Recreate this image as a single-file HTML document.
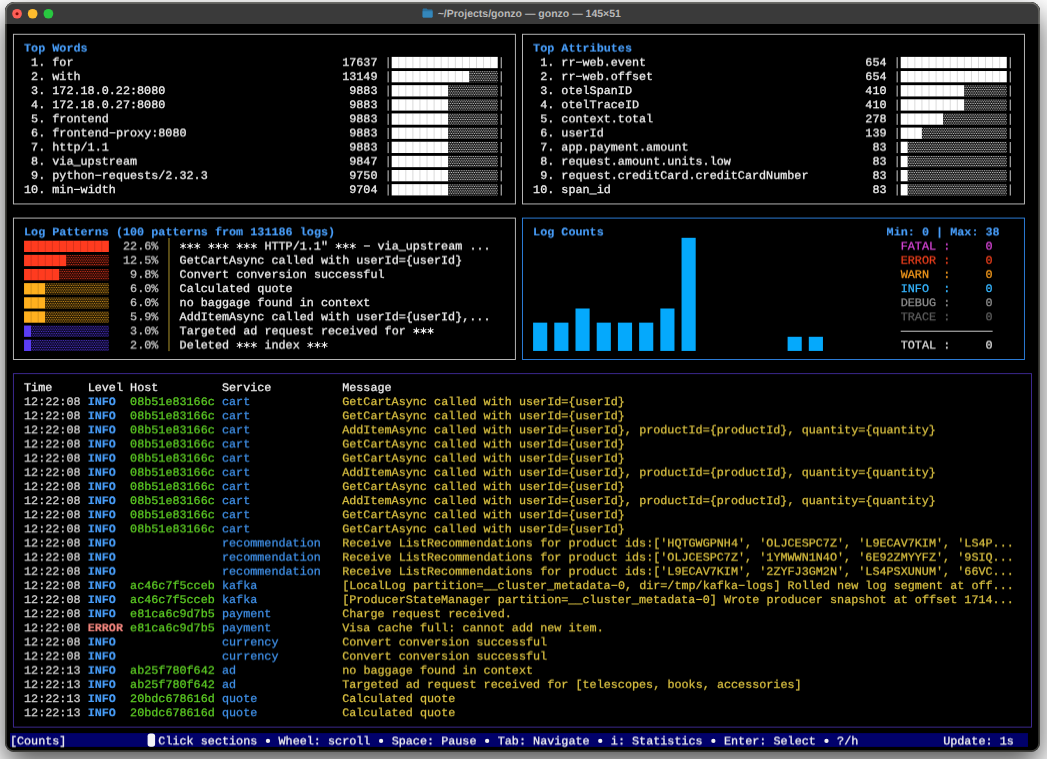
<!DOCTYPE html>
<html><head><meta charset="utf-8"><title>gonzo</title>
<style>
html,body{margin:0;padding:0;font-family:"Liberation Mono",monospace;}
body{width:1047px;height:759px;overflow:hidden;background:#ffffff;position:relative;
 font-family:"Liberation Mono",monospace;text-rendering:geometricPrecision;}
#win{position:absolute;left:5.3px;top:2px;width:1034.7px;height:749.7px;background:#000;
 border-radius:9px;overflow:hidden;
 box-shadow:0 13px 30px rgba(0,0,0,.68);}
#tb{position:absolute;left:0;top:0;width:100%;height:22.35px;background:#3a3a3a;}
#edge{position:absolute;left:0;top:0;right:0;bottom:0;border-radius:9px;
 box-shadow:inset 0 0 0 1.7px rgba(255,255,238,.25);pointer-events:none;}
.tl{position:absolute;width:9.2px;height:9.2px;border-radius:50%;top:6.6px;}
#title{position:absolute;top:0;left:432.4px;height:22.3px;line-height:25.6px;white-space:pre;
 font-family:"Liberation Sans",sans-serif;font-weight:bold;font-size:10.5px;color:#b9b9b9;}
#term{position:absolute;left:0;top:0;width:1047px;height:759px;}
.row{position:absolute;left:0;top:0;width:1047px;height:16px;will-change:transform;transform-origin:0 0;}
.t{position:absolute;top:0;white-space:pre;font-size:11.78px;line-height:14.14px;height:14.14px;
 transform:translateY(0px) scaleY(0.97);transform-origin:50% 50%;-webkit-text-stroke:0.27px currentColor;}
.b{font-weight:bold;-webkit-text-stroke:0.15px currentColor;}
.r{position:absolute;}
.bx{position:absolute;border:1px solid;}
</style></head>
<body>
<div id="win">
 <div id="tb"></div>
 <svg style="position:absolute;left:416.6px;top:6.1px" width="11.2" height="10" viewBox="0 0 22 20">
  <path d="M1 3.2C1 2 2 1 3.2 1h5.2c.8 0 1.3.3 1.8.9l1 1.3h7.6C20 3.2 21 4.2 21 5.4V17c0 1.2-1 2.2-2.2 2.2H3.2C2 19.200 1 18.200 1 17z" fill="#2a709d"/>
  <path d="M1 6.4h20V17c0 1.2-1 2.2-2.2 2.2H3.2C2 19.2 1 18.2 1 17z" fill="#3487bb"/>
 </svg>
 <div id="title">~/Projects/gonzo — gonzo — 145×51</div>
 <div id="edge"></div>
</div>
<svg id="shapes" width="1047" height="759" viewBox="0 0 1047 759" style="position:absolute;left:0;top:0">
<defs>
<pattern id="sh-w" width="1.7675" height="3.535" patternUnits="userSpaceOnUse" x="10.1" y="28.9"><rect width="1.7675" height="3.535" fill="#1b1b1b"/><rect x="0" y="0" width="0.9" height="0.9" fill="#c8c8c8"/><rect x="0.8838" y="1.7675" width="0.9" height="0.9" fill="#c8c8c8"/></pattern>
<pattern id="sh-r" width="1.7675" height="3.535" patternUnits="userSpaceOnUse" x="10.1" y="28.9"><rect width="1.7675" height="3.535" fill="#260804"/><rect x="0" y="0" width="0.9" height="0.9" fill="#d23119"/><rect x="0.8838" y="1.7675" width="0.9" height="0.9" fill="#d23119"/></pattern>
<pattern id="sh-o" width="1.7675" height="3.535" patternUnits="userSpaceOnUse" x="10.1" y="28.9"><rect width="1.7675" height="3.535" fill="#261a04"/><rect x="0" y="0" width="0.9" height="0.9" fill="#d29119"/><rect x="0.8838" y="1.7675" width="0.9" height="0.9" fill="#d29119"/></pattern>
<pattern id="sh-p" width="1.7675" height="3.535" patternUnits="userSpaceOnUse" x="10.1" y="28.9"><rect width="1.7675" height="3.535" fill="#0c0826"/><rect x="0" y="0" width="0.9" height="0.9" fill="#4b32ca"/><rect x="0.8838" y="1.7675" width="0.9" height="0.9" fill="#4b32ca"/></pattern>
</defs>
<rect x="13.44" y="34.27" width="501.97" height="169.68" fill="none" stroke="#bcbcbc" stroke-width="0.95"/>
<rect x="387.55" y="57.18" width="1.2" height="11.1" fill="#a8a8a8" />
<rect x="391.68" y="56.88" width="106.05" height="11.3" fill="#ffffff" />
<rect x="398.3" y="56.88" width="0.9" height="11.3" fill="rgba(0,0,0,0.16)" />
<rect x="405.37" y="56.88" width="0.9" height="11.3" fill="rgba(0,0,0,0.16)" />
<rect x="412.44" y="56.88" width="0.9" height="11.3" fill="rgba(0,0,0,0.16)" />
<rect x="419.51" y="56.88" width="0.9" height="11.3" fill="rgba(0,0,0,0.16)" />
<rect x="426.58" y="56.88" width="0.9" height="11.3" fill="rgba(0,0,0,0.16)" />
<rect x="433.65" y="56.88" width="0.9" height="11.3" fill="rgba(0,0,0,0.16)" />
<rect x="440.72" y="56.88" width="0.9" height="11.3" fill="rgba(0,0,0,0.16)" />
<rect x="447.79" y="56.88" width="0.9" height="11.3" fill="rgba(0,0,0,0.16)" />
<rect x="454.86" y="56.88" width="0.9" height="11.3" fill="rgba(0,0,0,0.16)" />
<rect x="461.93" y="56.88" width="0.9" height="11.3" fill="rgba(0,0,0,0.16)" />
<rect x="469" y="56.88" width="0.9" height="11.3" fill="rgba(0,0,0,0.16)" />
<rect x="476.07" y="56.88" width="0.9" height="11.3" fill="rgba(0,0,0,0.16)" />
<rect x="483.14" y="56.88" width="0.9" height="11.3" fill="rgba(0,0,0,0.16)" />
<rect x="490.21" y="56.88" width="0.9" height="11.3" fill="rgba(0,0,0,0.16)" />
<rect x="500.67" y="57.18" width="1.2" height="11.1" fill="#a8a8a8" />
<rect x="387.55" y="71.32" width="1.2" height="11.1" fill="#a8a8a8" />
<rect x="391.68" y="71.02" width="77.77" height="11.3" fill="#ffffff" />
<rect x="398.3" y="71.02" width="0.9" height="11.3" fill="rgba(0,0,0,0.16)" />
<rect x="405.37" y="71.02" width="0.9" height="11.3" fill="rgba(0,0,0,0.16)" />
<rect x="412.44" y="71.02" width="0.9" height="11.3" fill="rgba(0,0,0,0.16)" />
<rect x="419.51" y="71.02" width="0.9" height="11.3" fill="rgba(0,0,0,0.16)" />
<rect x="426.58" y="71.02" width="0.9" height="11.3" fill="rgba(0,0,0,0.16)" />
<rect x="433.65" y="71.02" width="0.9" height="11.3" fill="rgba(0,0,0,0.16)" />
<rect x="440.72" y="71.02" width="0.9" height="11.3" fill="rgba(0,0,0,0.16)" />
<rect x="447.79" y="71.02" width="0.9" height="11.3" fill="rgba(0,0,0,0.16)" />
<rect x="454.86" y="71.02" width="0.9" height="11.3" fill="rgba(0,0,0,0.16)" />
<rect x="461.93" y="71.02" width="0.9" height="11.3" fill="rgba(0,0,0,0.16)" />
<rect x="469.45" y="71.02" width="28.28" height="11.3" fill="url(#sh-w)" />
<rect x="500.67" y="71.32" width="1.2" height="11.1" fill="#a8a8a8" />
<rect x="387.55" y="85.46" width="1.2" height="11.1" fill="#a8a8a8" />
<rect x="391.68" y="85.16" width="56.56" height="11.3" fill="#ffffff" />
<rect x="398.3" y="85.16" width="0.9" height="11.3" fill="rgba(0,0,0,0.16)" />
<rect x="405.37" y="85.16" width="0.9" height="11.3" fill="rgba(0,0,0,0.16)" />
<rect x="412.44" y="85.16" width="0.9" height="11.3" fill="rgba(0,0,0,0.16)" />
<rect x="419.51" y="85.16" width="0.9" height="11.3" fill="rgba(0,0,0,0.16)" />
<rect x="426.58" y="85.16" width="0.9" height="11.3" fill="rgba(0,0,0,0.16)" />
<rect x="433.65" y="85.16" width="0.9" height="11.3" fill="rgba(0,0,0,0.16)" />
<rect x="440.72" y="85.16" width="0.9" height="11.3" fill="rgba(0,0,0,0.16)" />
<rect x="448.24" y="85.16" width="49.49" height="11.3" fill="url(#sh-w)" />
<rect x="500.67" y="85.46" width="1.2" height="11.1" fill="#a8a8a8" />
<rect x="387.55" y="99.6" width="1.2" height="11.1" fill="#a8a8a8" />
<rect x="391.68" y="99.3" width="56.56" height="11.3" fill="#ffffff" />
<rect x="398.3" y="99.3" width="0.9" height="11.3" fill="rgba(0,0,0,0.16)" />
<rect x="405.37" y="99.3" width="0.9" height="11.3" fill="rgba(0,0,0,0.16)" />
<rect x="412.44" y="99.3" width="0.9" height="11.3" fill="rgba(0,0,0,0.16)" />
<rect x="419.51" y="99.3" width="0.9" height="11.3" fill="rgba(0,0,0,0.16)" />
<rect x="426.58" y="99.3" width="0.9" height="11.3" fill="rgba(0,0,0,0.16)" />
<rect x="433.65" y="99.3" width="0.9" height="11.3" fill="rgba(0,0,0,0.16)" />
<rect x="440.72" y="99.3" width="0.9" height="11.3" fill="rgba(0,0,0,0.16)" />
<rect x="448.24" y="99.3" width="49.49" height="11.3" fill="url(#sh-w)" />
<rect x="500.67" y="99.6" width="1.2" height="11.1" fill="#a8a8a8" />
<rect x="387.55" y="113.74" width="1.2" height="11.1" fill="#a8a8a8" />
<rect x="391.68" y="113.44" width="56.56" height="11.3" fill="#ffffff" />
<rect x="398.3" y="113.44" width="0.9" height="11.3" fill="rgba(0,0,0,0.16)" />
<rect x="405.37" y="113.44" width="0.9" height="11.3" fill="rgba(0,0,0,0.16)" />
<rect x="412.44" y="113.44" width="0.9" height="11.3" fill="rgba(0,0,0,0.16)" />
<rect x="419.51" y="113.44" width="0.9" height="11.3" fill="rgba(0,0,0,0.16)" />
<rect x="426.58" y="113.44" width="0.9" height="11.3" fill="rgba(0,0,0,0.16)" />
<rect x="433.65" y="113.44" width="0.9" height="11.3" fill="rgba(0,0,0,0.16)" />
<rect x="440.72" y="113.44" width="0.9" height="11.3" fill="rgba(0,0,0,0.16)" />
<rect x="448.24" y="113.44" width="49.49" height="11.3" fill="url(#sh-w)" />
<rect x="500.67" y="113.74" width="1.2" height="11.1" fill="#a8a8a8" />
<rect x="109.38" y="132.3" width="6.07" height="1.1" fill="#f0f0f0" />
<rect x="387.55" y="127.88" width="1.2" height="11.1" fill="#a8a8a8" />
<rect x="391.68" y="127.58" width="56.56" height="11.3" fill="#ffffff" />
<rect x="398.3" y="127.58" width="0.9" height="11.3" fill="rgba(0,0,0,0.16)" />
<rect x="405.37" y="127.58" width="0.9" height="11.3" fill="rgba(0,0,0,0.16)" />
<rect x="412.44" y="127.58" width="0.9" height="11.3" fill="rgba(0,0,0,0.16)" />
<rect x="419.51" y="127.58" width="0.9" height="11.3" fill="rgba(0,0,0,0.16)" />
<rect x="426.58" y="127.58" width="0.9" height="11.3" fill="rgba(0,0,0,0.16)" />
<rect x="433.65" y="127.58" width="0.9" height="11.3" fill="rgba(0,0,0,0.16)" />
<rect x="440.72" y="127.58" width="0.9" height="11.3" fill="rgba(0,0,0,0.16)" />
<rect x="448.24" y="127.58" width="49.49" height="11.3" fill="url(#sh-w)" />
<rect x="500.67" y="127.88" width="1.2" height="11.1" fill="#a8a8a8" />
<rect x="387.55" y="142.02" width="1.2" height="11.1" fill="#a8a8a8" />
<rect x="391.68" y="141.72" width="56.56" height="11.3" fill="#ffffff" />
<rect x="398.3" y="141.72" width="0.9" height="11.3" fill="rgba(0,0,0,0.16)" />
<rect x="405.37" y="141.72" width="0.9" height="11.3" fill="rgba(0,0,0,0.16)" />
<rect x="412.44" y="141.72" width="0.9" height="11.3" fill="rgba(0,0,0,0.16)" />
<rect x="419.51" y="141.72" width="0.9" height="11.3" fill="rgba(0,0,0,0.16)" />
<rect x="426.58" y="141.72" width="0.9" height="11.3" fill="rgba(0,0,0,0.16)" />
<rect x="433.65" y="141.72" width="0.9" height="11.3" fill="rgba(0,0,0,0.16)" />
<rect x="440.72" y="141.72" width="0.9" height="11.3" fill="rgba(0,0,0,0.16)" />
<rect x="448.24" y="141.72" width="49.49" height="11.3" fill="url(#sh-w)" />
<rect x="500.67" y="142.02" width="1.2" height="11.1" fill="#a8a8a8" />
<rect x="387.55" y="156.16" width="1.2" height="11.1" fill="#a8a8a8" />
<rect x="391.68" y="155.86" width="56.56" height="11.3" fill="#ffffff" />
<rect x="398.3" y="155.86" width="0.9" height="11.3" fill="rgba(0,0,0,0.16)" />
<rect x="405.37" y="155.86" width="0.9" height="11.3" fill="rgba(0,0,0,0.16)" />
<rect x="412.44" y="155.86" width="0.9" height="11.3" fill="rgba(0,0,0,0.16)" />
<rect x="419.51" y="155.86" width="0.9" height="11.3" fill="rgba(0,0,0,0.16)" />
<rect x="426.58" y="155.86" width="0.9" height="11.3" fill="rgba(0,0,0,0.16)" />
<rect x="433.65" y="155.86" width="0.9" height="11.3" fill="rgba(0,0,0,0.16)" />
<rect x="440.72" y="155.86" width="0.9" height="11.3" fill="rgba(0,0,0,0.16)" />
<rect x="448.24" y="155.86" width="49.49" height="11.3" fill="url(#sh-w)" />
<rect x="500.67" y="156.16" width="1.2" height="11.1" fill="#a8a8a8" />
<rect x="95.24" y="174.72" width="6.07" height="1.1" fill="#f0f0f0" />
<rect x="387.55" y="170.3" width="1.2" height="11.1" fill="#a8a8a8" />
<rect x="391.68" y="170" width="56.56" height="11.3" fill="#ffffff" />
<rect x="398.3" y="170" width="0.9" height="11.3" fill="rgba(0,0,0,0.16)" />
<rect x="405.37" y="170" width="0.9" height="11.3" fill="rgba(0,0,0,0.16)" />
<rect x="412.44" y="170" width="0.9" height="11.3" fill="rgba(0,0,0,0.16)" />
<rect x="419.51" y="170" width="0.9" height="11.3" fill="rgba(0,0,0,0.16)" />
<rect x="426.58" y="170" width="0.9" height="11.3" fill="rgba(0,0,0,0.16)" />
<rect x="433.65" y="170" width="0.9" height="11.3" fill="rgba(0,0,0,0.16)" />
<rect x="440.72" y="170" width="0.9" height="11.3" fill="rgba(0,0,0,0.16)" />
<rect x="448.24" y="170" width="49.49" height="11.3" fill="url(#sh-w)" />
<rect x="500.67" y="170.3" width="1.2" height="11.1" fill="#a8a8a8" />
<rect x="74.03" y="188.86" width="6.07" height="1.1" fill="#f0f0f0" />
<rect x="387.55" y="184.44" width="1.2" height="11.1" fill="#a8a8a8" />
<rect x="391.68" y="184.14" width="56.56" height="11.3" fill="#ffffff" />
<rect x="398.3" y="184.14" width="0.9" height="11.3" fill="rgba(0,0,0,0.16)" />
<rect x="405.37" y="184.14" width="0.9" height="11.3" fill="rgba(0,0,0,0.16)" />
<rect x="412.44" y="184.14" width="0.9" height="11.3" fill="rgba(0,0,0,0.16)" />
<rect x="419.51" y="184.14" width="0.9" height="11.3" fill="rgba(0,0,0,0.16)" />
<rect x="426.58" y="184.14" width="0.9" height="11.3" fill="rgba(0,0,0,0.16)" />
<rect x="433.65" y="184.14" width="0.9" height="11.3" fill="rgba(0,0,0,0.16)" />
<rect x="440.72" y="184.14" width="0.9" height="11.3" fill="rgba(0,0,0,0.16)" />
<rect x="448.24" y="184.14" width="49.49" height="11.3" fill="url(#sh-w)" />
<rect x="500.67" y="184.44" width="1.2" height="11.1" fill="#a8a8a8" />
<rect x="522.48" y="34.27" width="501.97" height="169.68" fill="none" stroke="#bcbcbc" stroke-width="0.95"/>
<rect x="576" y="61.6" width="6.07" height="1.1" fill="#f0f0f0" />
<rect x="896.58" y="57.18" width="1.2" height="11.1" fill="#a8a8a8" />
<rect x="900.72" y="56.88" width="106.05" height="11.3" fill="#ffffff" />
<rect x="907.34" y="56.88" width="0.9" height="11.3" fill="rgba(0,0,0,0.16)" />
<rect x="914.41" y="56.88" width="0.9" height="11.3" fill="rgba(0,0,0,0.16)" />
<rect x="921.48" y="56.88" width="0.9" height="11.3" fill="rgba(0,0,0,0.16)" />
<rect x="928.55" y="56.88" width="0.9" height="11.3" fill="rgba(0,0,0,0.16)" />
<rect x="935.62" y="56.88" width="0.9" height="11.3" fill="rgba(0,0,0,0.16)" />
<rect x="942.69" y="56.88" width="0.9" height="11.3" fill="rgba(0,0,0,0.16)" />
<rect x="949.76" y="56.88" width="0.9" height="11.3" fill="rgba(0,0,0,0.16)" />
<rect x="956.83" y="56.88" width="0.9" height="11.3" fill="rgba(0,0,0,0.16)" />
<rect x="963.9" y="56.88" width="0.9" height="11.3" fill="rgba(0,0,0,0.16)" />
<rect x="970.97" y="56.88" width="0.9" height="11.3" fill="rgba(0,0,0,0.16)" />
<rect x="978.04" y="56.88" width="0.9" height="11.3" fill="rgba(0,0,0,0.16)" />
<rect x="985.11" y="56.88" width="0.9" height="11.3" fill="rgba(0,0,0,0.16)" />
<rect x="992.18" y="56.88" width="0.9" height="11.3" fill="rgba(0,0,0,0.16)" />
<rect x="999.25" y="56.88" width="0.9" height="11.3" fill="rgba(0,0,0,0.16)" />
<rect x="1009.7" y="57.18" width="1.2" height="11.1" fill="#a8a8a8" />
<rect x="576" y="75.74" width="6.07" height="1.1" fill="#f0f0f0" />
<rect x="896.58" y="71.32" width="1.2" height="11.1" fill="#a8a8a8" />
<rect x="900.72" y="71.02" width="106.05" height="11.3" fill="#ffffff" />
<rect x="907.34" y="71.02" width="0.9" height="11.3" fill="rgba(0,0,0,0.16)" />
<rect x="914.41" y="71.02" width="0.9" height="11.3" fill="rgba(0,0,0,0.16)" />
<rect x="921.48" y="71.02" width="0.9" height="11.3" fill="rgba(0,0,0,0.16)" />
<rect x="928.55" y="71.02" width="0.9" height="11.3" fill="rgba(0,0,0,0.16)" />
<rect x="935.62" y="71.02" width="0.9" height="11.3" fill="rgba(0,0,0,0.16)" />
<rect x="942.69" y="71.02" width="0.9" height="11.3" fill="rgba(0,0,0,0.16)" />
<rect x="949.76" y="71.02" width="0.9" height="11.3" fill="rgba(0,0,0,0.16)" />
<rect x="956.83" y="71.02" width="0.9" height="11.3" fill="rgba(0,0,0,0.16)" />
<rect x="963.9" y="71.02" width="0.9" height="11.3" fill="rgba(0,0,0,0.16)" />
<rect x="970.97" y="71.02" width="0.9" height="11.3" fill="rgba(0,0,0,0.16)" />
<rect x="978.04" y="71.02" width="0.9" height="11.3" fill="rgba(0,0,0,0.16)" />
<rect x="985.11" y="71.02" width="0.9" height="11.3" fill="rgba(0,0,0,0.16)" />
<rect x="992.18" y="71.02" width="0.9" height="11.3" fill="rgba(0,0,0,0.16)" />
<rect x="999.25" y="71.02" width="0.9" height="11.3" fill="rgba(0,0,0,0.16)" />
<rect x="1009.7" y="71.32" width="1.2" height="11.1" fill="#a8a8a8" />
<rect x="896.58" y="85.46" width="1.2" height="11.1" fill="#a8a8a8" />
<rect x="900.72" y="85.16" width="63.63" height="11.3" fill="#ffffff" />
<rect x="907.34" y="85.16" width="0.9" height="11.3" fill="rgba(0,0,0,0.16)" />
<rect x="914.41" y="85.16" width="0.9" height="11.3" fill="rgba(0,0,0,0.16)" />
<rect x="921.48" y="85.16" width="0.9" height="11.3" fill="rgba(0,0,0,0.16)" />
<rect x="928.55" y="85.16" width="0.9" height="11.3" fill="rgba(0,0,0,0.16)" />
<rect x="935.62" y="85.16" width="0.9" height="11.3" fill="rgba(0,0,0,0.16)" />
<rect x="942.69" y="85.16" width="0.9" height="11.3" fill="rgba(0,0,0,0.16)" />
<rect x="949.76" y="85.16" width="0.9" height="11.3" fill="rgba(0,0,0,0.16)" />
<rect x="956.83" y="85.16" width="0.9" height="11.3" fill="rgba(0,0,0,0.16)" />
<rect x="964.35" y="85.16" width="42.42" height="11.3" fill="url(#sh-w)" />
<rect x="1009.7" y="85.46" width="1.2" height="11.1" fill="#a8a8a8" />
<rect x="896.58" y="99.6" width="1.2" height="11.1" fill="#a8a8a8" />
<rect x="900.72" y="99.3" width="63.63" height="11.3" fill="#ffffff" />
<rect x="907.34" y="99.3" width="0.9" height="11.3" fill="rgba(0,0,0,0.16)" />
<rect x="914.41" y="99.3" width="0.9" height="11.3" fill="rgba(0,0,0,0.16)" />
<rect x="921.48" y="99.3" width="0.9" height="11.3" fill="rgba(0,0,0,0.16)" />
<rect x="928.55" y="99.3" width="0.9" height="11.3" fill="rgba(0,0,0,0.16)" />
<rect x="935.62" y="99.3" width="0.9" height="11.3" fill="rgba(0,0,0,0.16)" />
<rect x="942.69" y="99.3" width="0.9" height="11.3" fill="rgba(0,0,0,0.16)" />
<rect x="949.76" y="99.3" width="0.9" height="11.3" fill="rgba(0,0,0,0.16)" />
<rect x="956.83" y="99.3" width="0.9" height="11.3" fill="rgba(0,0,0,0.16)" />
<rect x="964.35" y="99.3" width="42.42" height="11.3" fill="url(#sh-w)" />
<rect x="1009.7" y="99.6" width="1.2" height="11.1" fill="#a8a8a8" />
<rect x="896.58" y="113.74" width="1.2" height="11.1" fill="#a8a8a8" />
<rect x="900.72" y="113.44" width="42.42" height="11.3" fill="#ffffff" />
<rect x="907.34" y="113.44" width="0.9" height="11.3" fill="rgba(0,0,0,0.16)" />
<rect x="914.41" y="113.44" width="0.9" height="11.3" fill="rgba(0,0,0,0.16)" />
<rect x="921.48" y="113.44" width="0.9" height="11.3" fill="rgba(0,0,0,0.16)" />
<rect x="928.55" y="113.44" width="0.9" height="11.3" fill="rgba(0,0,0,0.16)" />
<rect x="935.62" y="113.44" width="0.9" height="11.3" fill="rgba(0,0,0,0.16)" />
<rect x="943.14" y="113.44" width="63.63" height="11.3" fill="url(#sh-w)" />
<rect x="1009.7" y="113.74" width="1.2" height="11.1" fill="#a8a8a8" />
<rect x="896.58" y="127.88" width="1.2" height="11.1" fill="#a8a8a8" />
<rect x="900.72" y="127.58" width="21.21" height="11.3" fill="#ffffff" />
<rect x="907.34" y="127.58" width="0.9" height="11.3" fill="rgba(0,0,0,0.16)" />
<rect x="914.41" y="127.58" width="0.9" height="11.3" fill="rgba(0,0,0,0.16)" />
<rect x="921.93" y="127.58" width="84.84" height="11.3" fill="url(#sh-w)" />
<rect x="1009.7" y="127.88" width="1.2" height="11.1" fill="#a8a8a8" />
<rect x="896.58" y="142.02" width="1.2" height="11.1" fill="#a8a8a8" />
<rect x="900.72" y="141.72" width="7.07" height="11.3" fill="#ffffff" />
<rect x="907.79" y="141.72" width="98.98" height="11.3" fill="url(#sh-w)" />
<rect x="1009.7" y="142.02" width="1.2" height="11.1" fill="#a8a8a8" />
<rect x="896.58" y="156.16" width="1.2" height="11.1" fill="#a8a8a8" />
<rect x="900.72" y="155.86" width="7.07" height="11.3" fill="#ffffff" />
<rect x="907.79" y="155.86" width="98.98" height="11.3" fill="url(#sh-w)" />
<rect x="1009.7" y="156.16" width="1.2" height="11.1" fill="#a8a8a8" />
<rect x="896.58" y="170.3" width="1.2" height="11.1" fill="#a8a8a8" />
<rect x="900.72" y="170" width="7.07" height="11.3" fill="#ffffff" />
<rect x="907.79" y="170" width="98.98" height="11.3" fill="url(#sh-w)" />
<rect x="1009.7" y="170.3" width="1.2" height="11.1" fill="#a8a8a8" />
<rect x="896.58" y="184.44" width="1.2" height="11.1" fill="#a8a8a8" />
<rect x="900.72" y="184.14" width="7.07" height="11.3" fill="#ffffff" />
<rect x="907.79" y="184.14" width="98.98" height="11.3" fill="url(#sh-w)" />
<rect x="1009.7" y="184.44" width="1.2" height="11.1" fill="#a8a8a8" />
<rect x="13.44" y="218.09" width="501.97" height="141.4" fill="none" stroke="#bcbcbc" stroke-width="0.95"/>
<rect x="24.04" y="240.7" width="84.84" height="11.3" fill="#ff3b1f" />
<rect x="30.66" y="240.7" width="0.9" height="11.3" fill="rgba(0,0,0,0.16)" />
<rect x="37.73" y="240.7" width="0.9" height="11.3" fill="rgba(0,0,0,0.16)" />
<rect x="44.8" y="240.7" width="0.9" height="11.3" fill="rgba(0,0,0,0.16)" />
<rect x="51.87" y="240.7" width="0.9" height="11.3" fill="rgba(0,0,0,0.16)" />
<rect x="58.94" y="240.7" width="0.9" height="11.3" fill="rgba(0,0,0,0.16)" />
<rect x="66.01" y="240.7" width="0.9" height="11.3" fill="rgba(0,0,0,0.16)" />
<rect x="73.08" y="240.7" width="0.9" height="11.3" fill="rgba(0,0,0,0.16)" />
<rect x="80.15" y="240.7" width="0.9" height="11.3" fill="rgba(0,0,0,0.16)" />
<rect x="87.22" y="240.7" width="0.9" height="11.3" fill="rgba(0,0,0,0.16)" />
<rect x="94.29" y="240.7" width="0.9" height="11.3" fill="rgba(0,0,0,0.16)" />
<rect x="101.36" y="240.7" width="0.9" height="11.3" fill="rgba(0,0,0,0.16)" />
<path d="M183.12 242.72L183.12 249.32M180.26 244.37L185.97 247.67M185.97 244.37L180.26 247.67" stroke="#f0f0f0" stroke-width="1.05" fill="none"/>
<path d="M190.19 242.72L190.19 249.32M187.33 244.37L193.04 247.67M193.04 244.37L187.33 247.67" stroke="#f0f0f0" stroke-width="1.05" fill="none"/>
<path d="M197.25 242.72L197.25 249.32M194.4 244.37L200.11 247.67M200.11 244.37L194.4 247.67" stroke="#f0f0f0" stroke-width="1.05" fill="none"/>
<path d="M211.4 242.72L211.4 249.32M208.54 244.37L214.25 247.67M214.25 244.37L208.54 247.67" stroke="#f0f0f0" stroke-width="1.05" fill="none"/>
<path d="M218.47 242.72L218.47 249.32M215.61 244.37L221.32 247.67M221.32 244.37L215.61 247.67" stroke="#f0f0f0" stroke-width="1.05" fill="none"/>
<path d="M225.54 242.72L225.54 249.32M222.68 244.37L228.39 247.67M228.39 244.37L222.68 247.67" stroke="#f0f0f0" stroke-width="1.05" fill="none"/>
<path d="M239.68 242.72L239.68 249.32M236.82 244.37L242.53 247.67M242.53 244.37L236.82 247.67" stroke="#f0f0f0" stroke-width="1.05" fill="none"/>
<path d="M246.75 242.72L246.75 249.32M243.89 244.37L249.6 247.67M249.6 244.37L243.89 247.67" stroke="#f0f0f0" stroke-width="1.05" fill="none"/>
<path d="M253.81 242.72L253.81 249.32M250.96 244.37L256.67 247.67M256.67 244.37L250.96 247.67" stroke="#f0f0f0" stroke-width="1.05" fill="none"/>
<path d="M338.66 242.72L338.66 249.32M335.8 244.37L341.51 247.67M341.51 244.37L335.8 247.67" stroke="#f0f0f0" stroke-width="1.05" fill="none"/>
<path d="M345.73 242.72L345.73 249.32M342.87 244.37L348.58 247.67M348.58 244.37L342.87 247.67" stroke="#f0f0f0" stroke-width="1.05" fill="none"/>
<path d="M352.8 242.72L352.8 249.32M349.94 244.37L355.65 247.67M355.65 244.37L349.94 247.67" stroke="#f0f0f0" stroke-width="1.05" fill="none"/>
<rect x="363.9" y="245.42" width="6.07" height="1.1" fill="#f0f0f0" />
<rect x="24.04" y="254.84" width="42.42" height="11.3" fill="#ff3b1f" />
<rect x="30.66" y="254.84" width="0.9" height="11.3" fill="rgba(0,0,0,0.16)" />
<rect x="37.73" y="254.84" width="0.9" height="11.3" fill="rgba(0,0,0,0.16)" />
<rect x="44.8" y="254.84" width="0.9" height="11.3" fill="rgba(0,0,0,0.16)" />
<rect x="51.87" y="254.84" width="0.9" height="11.3" fill="rgba(0,0,0,0.16)" />
<rect x="58.94" y="254.84" width="0.9" height="11.3" fill="rgba(0,0,0,0.16)" />
<rect x="66.46" y="254.84" width="42.42" height="11.3" fill="url(#sh-r)" />
<rect x="24.04" y="268.98" width="35.35" height="11.3" fill="#ff3b1f" />
<rect x="30.66" y="268.98" width="0.9" height="11.3" fill="rgba(0,0,0,0.16)" />
<rect x="37.73" y="268.98" width="0.9" height="11.3" fill="rgba(0,0,0,0.16)" />
<rect x="44.8" y="268.98" width="0.9" height="11.3" fill="rgba(0,0,0,0.16)" />
<rect x="51.87" y="268.98" width="0.9" height="11.3" fill="rgba(0,0,0,0.16)" />
<rect x="59.39" y="268.98" width="49.49" height="11.3" fill="url(#sh-r)" />
<rect x="24.04" y="283.12" width="21.21" height="11.3" fill="#ffb01e" />
<rect x="30.66" y="283.12" width="0.9" height="11.3" fill="rgba(0,0,0,0.16)" />
<rect x="37.73" y="283.12" width="0.9" height="11.3" fill="rgba(0,0,0,0.16)" />
<rect x="45.25" y="283.12" width="63.63" height="11.3" fill="url(#sh-o)" />
<rect x="24.04" y="297.26" width="21.21" height="11.3" fill="#ffb01e" />
<rect x="30.66" y="297.26" width="0.9" height="11.3" fill="rgba(0,0,0,0.16)" />
<rect x="37.73" y="297.26" width="0.9" height="11.3" fill="rgba(0,0,0,0.16)" />
<rect x="45.25" y="297.26" width="63.63" height="11.3" fill="url(#sh-o)" />
<rect x="24.04" y="311.4" width="21.21" height="11.3" fill="#ffb01e" />
<rect x="30.66" y="311.4" width="0.9" height="11.3" fill="rgba(0,0,0,0.16)" />
<rect x="37.73" y="311.4" width="0.9" height="11.3" fill="rgba(0,0,0,0.16)" />
<rect x="45.25" y="311.4" width="63.63" height="11.3" fill="url(#sh-o)" />
<rect x="24.04" y="325.54" width="7.07" height="11.3" fill="#5b3df5" />
<rect x="31.11" y="325.54" width="77.77" height="11.3" fill="url(#sh-p)" />
<path d="M416.43 327.56L416.43 334.16M413.57 329.21L419.28 332.51M419.28 329.21L413.57 332.51" stroke="#f0f0f0" stroke-width="1.05" fill="none"/>
<path d="M423.5 327.56L423.5 334.16M420.64 329.21L426.35 332.51M426.35 329.21L420.64 332.51" stroke="#f0f0f0" stroke-width="1.05" fill="none"/>
<path d="M430.56 327.56L430.56 334.16M427.71 329.21L433.42 332.51M433.42 329.21L427.71 332.51" stroke="#f0f0f0" stroke-width="1.05" fill="none"/>
<rect x="24.04" y="339.68" width="7.07" height="11.3" fill="#5b3df5" />
<rect x="31.11" y="339.68" width="77.77" height="11.3" fill="url(#sh-p)" />
<path d="M239.68 341.7L239.68 348.3M236.82 343.35L242.53 346.65M242.53 343.35L236.82 346.65" stroke="#f0f0f0" stroke-width="1.05" fill="none"/>
<path d="M246.75 341.7L246.75 348.3M243.89 343.35L249.6 346.65M249.6 343.35L243.89 346.65" stroke="#f0f0f0" stroke-width="1.05" fill="none"/>
<path d="M253.81 341.7L253.81 348.3M250.96 343.35L256.67 346.65M256.67 343.35L250.96 346.65" stroke="#f0f0f0" stroke-width="1.05" fill="none"/>
<path d="M310.38 341.7L310.38 348.3M307.52 343.35L313.23 346.65M313.23 343.35L307.52 346.65" stroke="#f0f0f0" stroke-width="1.05" fill="none"/>
<path d="M317.44 341.7L317.44 348.3M314.59 343.35L320.3 346.65M320.3 343.35L314.59 346.65" stroke="#f0f0f0" stroke-width="1.05" fill="none"/>
<path d="M324.52 341.7L324.52 348.3M321.66 343.35L327.37 346.65M327.37 343.35L321.66 346.65" stroke="#f0f0f0" stroke-width="1.05" fill="none"/>
<rect x="168.43" y="238" width="1.1" height="113.12" fill="#9c8528" />
<rect x="522.48" y="218.09" width="501.97" height="141.4" fill="none" stroke="#2d80de" stroke-width="0.95"/>
<rect x="900.72" y="330.71" width="91.91" height="1" fill="#c9c9c9" />
<rect x="533.08" y="322.64" width="14.14" height="28.28" fill="#05a9fc" />
<rect x="554.29" y="322.64" width="14.14" height="28.28" fill="#05a9fc" />
<rect x="575.5" y="308.5" width="14.14" height="42.42" fill="#05a9fc" />
<rect x="596.71" y="322.64" width="14.14" height="28.28" fill="#05a9fc" />
<rect x="617.92" y="322.64" width="14.14" height="28.28" fill="#05a9fc" />
<rect x="639.13" y="322.64" width="14.14" height="28.28" fill="#05a9fc" />
<rect x="660.34" y="308.5" width="14.14" height="42.42" fill="#05a9fc" />
<rect x="681.55" y="237.8" width="14.14" height="113.12" fill="#05a9fc" />
<rect x="787.6" y="336.78" width="14.14" height="14.14" fill="#05a9fc" />
<rect x="808.81" y="336.78" width="14.14" height="14.14" fill="#05a9fc" />
<rect x="13.44" y="373.63" width="1018.08" height="353.5" fill="none" stroke="#3e2a94" stroke-width="0.95"/>
<rect x="611.35" y="584.78" width="6.07" height="1.1" fill="#d8bf40" />
<rect x="738.61" y="584.78" width="6.07" height="1.1" fill="#d8bf40" />
<rect x="696.19" y="598.92" width="6.07" height="1.1" fill="#d8bf40" />
<circle cx="17.05" cy="13.75" r="4.85" fill="#fe5f57"/>
<circle cx="32.65" cy="13.75" r="4.85" fill="#febc2e"/>
<circle cx="48.4" cy="13.75" r="4.85" fill="#28c840"/>
<circle cx="17.05" cy="13.75" r="1.55" fill="#7d0a06"/>
<rect x="10.05" y="733.1" width="1017.93" height="13.8" fill="#01016b" />
<rect x="147.6" y="733.5" width="7.5" height="13.3" fill="#f4f4f7" rx="2.8"/>
<circle cx="267.96" cy="740.97" r="2.15" fill="#f0f0f0"/>
<circle cx="381.07" cy="740.97" r="2.15" fill="#f0f0f0"/>
<circle cx="487.12" cy="740.97" r="2.15" fill="#f0f0f0"/>
<circle cx="600.25" cy="740.97" r="2.15" fill="#f0f0f0"/>
<circle cx="713.37" cy="740.97" r="2.15" fill="#f0f0f0"/>
<circle cx="826.49" cy="740.97" r="2.15" fill="#f0f0f0"/>
</svg>
<div id="term">
<div class="row" style="transform:translateY(41.54px) rotate(0.003deg)"><span class="t b" style="left:24.04px;color:#489df8;">Top</span><span class="t b" style="left:52.32px;color:#489df8;">Words</span><span class="t b" style="left:533.08px;color:#489df8;">Top</span><span class="t b" style="left:561.36px;color:#489df8;">Attributes</span></div>
<div class="row" style="transform:translateY(55.68px) rotate(0.003deg)"><span class="t" style="left:31.11px;color:#f0f0f0;">1.</span><span class="t" style="left:52.32px;color:#f0f0f0;">for</span><span class="t" style="left:342.19px;color:#f0f0f0;">17637</span><span class="t" style="left:540.15px;color:#f0f0f0;">1.</span><span class="t" style="left:561.36px;color:#f0f0f0;">rr</span><span class="t" style="left:582.57px;color:#f0f0f0;">web.event</span><span class="t" style="left:865.37px;color:#f0f0f0;">654</span></div>
<div class="row" style="transform:translateY(69.82px) rotate(0.003deg)"><span class="t" style="left:31.11px;color:#f0f0f0;">2.</span><span class="t" style="left:52.32px;color:#f0f0f0;">with</span><span class="t" style="left:342.19px;color:#f0f0f0;">13149</span><span class="t" style="left:540.15px;color:#f0f0f0;">2.</span><span class="t" style="left:561.36px;color:#f0f0f0;">rr</span><span class="t" style="left:582.57px;color:#f0f0f0;">web.offset</span><span class="t" style="left:865.37px;color:#f0f0f0;">654</span></div>
<div class="row" style="transform:translateY(83.96px) rotate(0.003deg)"><span class="t" style="left:31.11px;color:#f0f0f0;">3.</span><span class="t" style="left:52.32px;color:#f0f0f0;">172.18.0.22:8080</span><span class="t" style="left:349.26px;color:#f0f0f0;">9883</span><span class="t" style="left:540.15px;color:#f0f0f0;">3.</span><span class="t" style="left:561.36px;color:#f0f0f0;">otelSpanID</span><span class="t" style="left:865.37px;color:#f0f0f0;">410</span></div>
<div class="row" style="transform:translateY(98.1px) rotate(0.003deg)"><span class="t" style="left:31.11px;color:#f0f0f0;">4.</span><span class="t" style="left:52.32px;color:#f0f0f0;">172.18.0.27:8080</span><span class="t" style="left:349.26px;color:#f0f0f0;">9883</span><span class="t" style="left:540.15px;color:#f0f0f0;">4.</span><span class="t" style="left:561.36px;color:#f0f0f0;">otelTraceID</span><span class="t" style="left:865.37px;color:#f0f0f0;">410</span></div>
<div class="row" style="transform:translateY(112.24px) rotate(0.003deg)"><span class="t" style="left:31.11px;color:#f0f0f0;">5.</span><span class="t" style="left:52.32px;color:#f0f0f0;">frontend</span><span class="t" style="left:349.26px;color:#f0f0f0;">9883</span><span class="t" style="left:540.15px;color:#f0f0f0;">5.</span><span class="t" style="left:561.36px;color:#f0f0f0;">context.total</span><span class="t" style="left:865.37px;color:#f0f0f0;">278</span></div>
<div class="row" style="transform:translateY(126.38px) rotate(0.003deg)"><span class="t" style="left:31.11px;color:#f0f0f0;">6.</span><span class="t" style="left:52.32px;color:#f0f0f0;">frontend</span><span class="t" style="left:115.95px;color:#f0f0f0;">proxy:8080</span><span class="t" style="left:349.26px;color:#f0f0f0;">9883</span><span class="t" style="left:540.15px;color:#f0f0f0;">6.</span><span class="t" style="left:561.36px;color:#f0f0f0;">userId</span><span class="t" style="left:865.37px;color:#f0f0f0;">139</span></div>
<div class="row" style="transform:translateY(140.52px) rotate(0.003deg)"><span class="t" style="left:31.11px;color:#f0f0f0;">7.</span><span class="t" style="left:52.32px;color:#f0f0f0;">http/1.1</span><span class="t" style="left:349.26px;color:#f0f0f0;">9883</span><span class="t" style="left:540.15px;color:#f0f0f0;">7.</span><span class="t" style="left:561.36px;color:#f0f0f0;">app.payment.amount</span><span class="t" style="left:872.44px;color:#f0f0f0;">83</span></div>
<div class="row" style="transform:translateY(154.66px) rotate(0.003deg)"><span class="t" style="left:31.11px;color:#f0f0f0;">8.</span><span class="t" style="left:52.32px;color:#f0f0f0;">via_upstream</span><span class="t" style="left:349.26px;color:#f0f0f0;">9847</span><span class="t" style="left:540.15px;color:#f0f0f0;">8.</span><span class="t" style="left:561.36px;color:#f0f0f0;">request.amount.units.low</span><span class="t" style="left:872.44px;color:#f0f0f0;">83</span></div>
<div class="row" style="transform:translateY(168.8px) rotate(0.003deg)"><span class="t" style="left:31.11px;color:#f0f0f0;">9.</span><span class="t" style="left:52.32px;color:#f0f0f0;">python</span><span class="t" style="left:101.81px;color:#f0f0f0;">requests/2.32.3</span><span class="t" style="left:349.26px;color:#f0f0f0;">9750</span><span class="t" style="left:540.15px;color:#f0f0f0;">9.</span><span class="t" style="left:561.36px;color:#f0f0f0;">request.creditCard.creditCardNumber</span><span class="t" style="left:872.44px;color:#f0f0f0;">83</span></div>
<div class="row" style="transform:translateY(182.94px) rotate(0.003deg)"><span class="t" style="left:24.04px;color:#f0f0f0;">10.</span><span class="t" style="left:52.32px;color:#f0f0f0;">min</span><span class="t" style="left:80.6px;color:#f0f0f0;">width</span><span class="t" style="left:349.26px;color:#f0f0f0;">9704</span><span class="t" style="left:533.08px;color:#f0f0f0;">10.</span><span class="t" style="left:561.36px;color:#f0f0f0;">span_id</span><span class="t" style="left:872.44px;color:#f0f0f0;">83</span></div>
<div class="row" style="transform:translateY(225.36px) rotate(0.003deg)"><span class="t b" style="left:24.04px;color:#489df8;">Log</span><span class="t b" style="left:52.32px;color:#489df8;">Patterns</span><span class="t b" style="left:115.95px;color:#489df8;">(100</span><span class="t b" style="left:151.3px;color:#489df8;">patterns</span><span class="t b" style="left:214.93px;color:#489df8;">from</span><span class="t b" style="left:250.28px;color:#489df8;">131186</span><span class="t b" style="left:299.77px;color:#489df8;">logs)</span><span class="t b" style="left:533.08px;color:#489df8;">Log</span><span class="t b" style="left:561.36px;color:#489df8;">Counts</span><span class="t b" style="left:886.58px;color:#489df8;">Min:</span><span class="t b" style="left:921.93px;color:#489df8;">0</span><span class="t b" style="left:936.07px;color:#489df8;">|</span><span class="t b" style="left:950.21px;color:#489df8;">Max:</span><span class="t b" style="left:985.56px;color:#489df8;">38</span></div>
<div class="row" style="transform:translateY(239.5px) rotate(0.003deg)"><span class="t" style="left:123.02px;color:#c6c6c6;">22.6%</span><span class="t" style="left:264.42px;color:#f0f0f0;">HTTP/1.1&quot;</span><span class="t" style="left:377.54px;color:#f0f0f0;">via_upstream</span><span class="t" style="left:469.45px;color:#f0f0f0;">...</span><span class="t" style="left:900.72px;color:#d845d8;">FATAL</span><span class="t" style="left:943.14px;color:#d845d8;">:</span><span class="t" style="left:985.56px;color:#d845d8;">0</span></div>
<div class="row" style="transform:translateY(253.64px) rotate(0.003deg)"><span class="t" style="left:123.02px;color:#c6c6c6;">12.5%</span><span class="t" style="left:179.58px;color:#f0f0f0;">GetCartAsync</span><span class="t" style="left:271.49px;color:#f0f0f0;">called</span><span class="t" style="left:320.98px;color:#f0f0f0;">with</span><span class="t" style="left:356.33px;color:#f0f0f0;">userId={userId}</span><span class="t" style="left:900.72px;color:#ec3f1c;">ERROR</span><span class="t" style="left:943.14px;color:#ec3f1c;">:</span><span class="t" style="left:985.56px;color:#ec3f1c;">0</span></div>
<div class="row" style="transform:translateY(267.78px) rotate(0.003deg)"><span class="t" style="left:130.09px;color:#c6c6c6;">9.8%</span><span class="t" style="left:179.58px;color:#f0f0f0;">Convert</span><span class="t" style="left:236.14px;color:#f0f0f0;">conversion</span><span class="t" style="left:313.91px;color:#f0f0f0;">successful</span><span class="t" style="left:900.72px;color:#f59a1c;">WARN</span><span class="t" style="left:943.14px;color:#f59a1c;">:</span><span class="t" style="left:985.56px;color:#f59a1c;">0</span></div>
<div class="row" style="transform:translateY(281.92px) rotate(0.003deg)"><span class="t" style="left:130.09px;color:#c6c6c6;">6.0%</span><span class="t" style="left:179.58px;color:#f0f0f0;">Calculated</span><span class="t" style="left:257.35px;color:#f0f0f0;">quote</span><span class="t" style="left:900.72px;color:#35b5ff;">INFO</span><span class="t" style="left:943.14px;color:#35b5ff;">:</span><span class="t" style="left:985.56px;color:#35b5ff;">0</span></div>
<div class="row" style="transform:translateY(296.06px) rotate(0.003deg)"><span class="t" style="left:130.09px;color:#c6c6c6;">6.0%</span><span class="t" style="left:179.58px;color:#f0f0f0;">no</span><span class="t" style="left:200.79px;color:#f0f0f0;">baggage</span><span class="t" style="left:257.35px;color:#f0f0f0;">found</span><span class="t" style="left:299.77px;color:#f0f0f0;">in</span><span class="t" style="left:320.98px;color:#f0f0f0;">context</span><span class="t" style="left:900.72px;color:#8e8e8e;">DEBUG</span><span class="t" style="left:943.14px;color:#8e8e8e;">:</span><span class="t" style="left:985.56px;color:#8e8e8e;">0</span></div>
<div class="row" style="transform:translateY(310.2px) rotate(0.003deg)"><span class="t" style="left:130.09px;color:#c6c6c6;">5.9%</span><span class="t" style="left:179.58px;color:#f0f0f0;">AddItemAsync</span><span class="t" style="left:271.49px;color:#f0f0f0;">called</span><span class="t" style="left:320.98px;color:#f0f0f0;">with</span><span class="t" style="left:356.33px;color:#f0f0f0;">userId={userId},...</span><span class="t" style="left:900.72px;color:#5e5e5e;">TRACE</span><span class="t" style="left:943.14px;color:#5e5e5e;">:</span><span class="t" style="left:985.56px;color:#5e5e5e;">0</span></div>
<div class="row" style="transform:translateY(324.34px) rotate(0.003deg)"><span class="t" style="left:130.09px;color:#c6c6c6;">3.0%</span><span class="t" style="left:179.58px;color:#f0f0f0;">Targeted</span><span class="t" style="left:243.21px;color:#f0f0f0;">ad</span><span class="t" style="left:264.42px;color:#f0f0f0;">request</span><span class="t" style="left:320.98px;color:#f0f0f0;">received</span><span class="t" style="left:384.61px;color:#f0f0f0;">for</span></div>
<div class="row" style="transform:translateY(338.48px) rotate(0.003deg)"><span class="t" style="left:130.09px;color:#c6c6c6;">2.0%</span><span class="t" style="left:179.58px;color:#f0f0f0;">Deleted</span><span class="t" style="left:264.42px;color:#f0f0f0;">index</span><span class="t" style="left:900.72px;color:#dedede;">TOTAL</span><span class="t" style="left:943.14px;color:#dedede;">:</span><span class="t" style="left:985.56px;color:#dedede;">0</span></div>
<div class="row" style="transform:translateY(380.9px) rotate(0.003deg)"><span class="t" style="left:24.04px;color:#f0f0f0;">Time</span><span class="t" style="left:87.67px;color:#f0f0f0;">Level</span><span class="t" style="left:130.09px;color:#f0f0f0;">Host</span><span class="t" style="left:222px;color:#f0f0f0;">Service</span><span class="t" style="left:342.19px;color:#f0f0f0;">Message</span></div>
<div class="row" style="transform:translateY(395.04px) rotate(0.003deg)"><span class="t" style="left:24.04px;color:#d2d2d2;">12:22:08</span><span class="t b" style="left:87.67px;color:#489df8;">INFO</span><span class="t" style="left:130.09px;color:#5ccb24;">08b51e83166c</span><span class="t" style="left:222px;color:#3f8fe6;">cart</span><span class="t" style="left:342.19px;color:#d8bf40;">GetCartAsync</span><span class="t" style="left:434.1px;color:#d8bf40;">called</span><span class="t" style="left:483.59px;color:#d8bf40;">with</span><span class="t" style="left:518.94px;color:#d8bf40;">userId={userId}</span></div>
<div class="row" style="transform:translateY(409.18px) rotate(0.003deg)"><span class="t" style="left:24.04px;color:#d2d2d2;">12:22:08</span><span class="t b" style="left:87.67px;color:#489df8;">INFO</span><span class="t" style="left:130.09px;color:#5ccb24;">08b51e83166c</span><span class="t" style="left:222px;color:#3f8fe6;">cart</span><span class="t" style="left:342.19px;color:#d8bf40;">GetCartAsync</span><span class="t" style="left:434.1px;color:#d8bf40;">called</span><span class="t" style="left:483.59px;color:#d8bf40;">with</span><span class="t" style="left:518.94px;color:#d8bf40;">userId={userId}</span></div>
<div class="row" style="transform:translateY(423.32px) rotate(0.003deg)"><span class="t" style="left:24.04px;color:#d2d2d2;">12:22:08</span><span class="t b" style="left:87.67px;color:#489df8;">INFO</span><span class="t" style="left:130.09px;color:#5ccb24;">08b51e83166c</span><span class="t" style="left:222px;color:#3f8fe6;">cart</span><span class="t" style="left:342.19px;color:#d8bf40;">AddItemAsync</span><span class="t" style="left:434.1px;color:#d8bf40;">called</span><span class="t" style="left:483.59px;color:#d8bf40;">with</span><span class="t" style="left:518.94px;color:#d8bf40;">userId={userId},</span><span class="t" style="left:639.13px;color:#d8bf40;">productId={productId},</span><span class="t" style="left:801.74px;color:#d8bf40;">quantity={quantity}</span></div>
<div class="row" style="transform:translateY(437.46px) rotate(0.003deg)"><span class="t" style="left:24.04px;color:#d2d2d2;">12:22:08</span><span class="t b" style="left:87.67px;color:#489df8;">INFO</span><span class="t" style="left:130.09px;color:#5ccb24;">08b51e83166c</span><span class="t" style="left:222px;color:#3f8fe6;">cart</span><span class="t" style="left:342.19px;color:#d8bf40;">GetCartAsync</span><span class="t" style="left:434.1px;color:#d8bf40;">called</span><span class="t" style="left:483.59px;color:#d8bf40;">with</span><span class="t" style="left:518.94px;color:#d8bf40;">userId={userId}</span></div>
<div class="row" style="transform:translateY(451.6px) rotate(0.003deg)"><span class="t" style="left:24.04px;color:#d2d2d2;">12:22:08</span><span class="t b" style="left:87.67px;color:#489df8;">INFO</span><span class="t" style="left:130.09px;color:#5ccb24;">08b51e83166c</span><span class="t" style="left:222px;color:#3f8fe6;">cart</span><span class="t" style="left:342.19px;color:#d8bf40;">GetCartAsync</span><span class="t" style="left:434.1px;color:#d8bf40;">called</span><span class="t" style="left:483.59px;color:#d8bf40;">with</span><span class="t" style="left:518.94px;color:#d8bf40;">userId={userId}</span></div>
<div class="row" style="transform:translateY(465.74px) rotate(0.003deg)"><span class="t" style="left:24.04px;color:#d2d2d2;">12:22:08</span><span class="t b" style="left:87.67px;color:#489df8;">INFO</span><span class="t" style="left:130.09px;color:#5ccb24;">08b51e83166c</span><span class="t" style="left:222px;color:#3f8fe6;">cart</span><span class="t" style="left:342.19px;color:#d8bf40;">AddItemAsync</span><span class="t" style="left:434.1px;color:#d8bf40;">called</span><span class="t" style="left:483.59px;color:#d8bf40;">with</span><span class="t" style="left:518.94px;color:#d8bf40;">userId={userId},</span><span class="t" style="left:639.13px;color:#d8bf40;">productId={productId},</span><span class="t" style="left:801.74px;color:#d8bf40;">quantity={quantity}</span></div>
<div class="row" style="transform:translateY(479.88px) rotate(0.003deg)"><span class="t" style="left:24.04px;color:#d2d2d2;">12:22:08</span><span class="t b" style="left:87.67px;color:#489df8;">INFO</span><span class="t" style="left:130.09px;color:#5ccb24;">08b51e83166c</span><span class="t" style="left:222px;color:#3f8fe6;">cart</span><span class="t" style="left:342.19px;color:#d8bf40;">GetCartAsync</span><span class="t" style="left:434.1px;color:#d8bf40;">called</span><span class="t" style="left:483.59px;color:#d8bf40;">with</span><span class="t" style="left:518.94px;color:#d8bf40;">userId={userId}</span></div>
<div class="row" style="transform:translateY(494.02px) rotate(0.003deg)"><span class="t" style="left:24.04px;color:#d2d2d2;">12:22:08</span><span class="t b" style="left:87.67px;color:#489df8;">INFO</span><span class="t" style="left:130.09px;color:#5ccb24;">08b51e83166c</span><span class="t" style="left:222px;color:#3f8fe6;">cart</span><span class="t" style="left:342.19px;color:#d8bf40;">AddItemAsync</span><span class="t" style="left:434.1px;color:#d8bf40;">called</span><span class="t" style="left:483.59px;color:#d8bf40;">with</span><span class="t" style="left:518.94px;color:#d8bf40;">userId={userId},</span><span class="t" style="left:639.13px;color:#d8bf40;">productId={productId},</span><span class="t" style="left:801.74px;color:#d8bf40;">quantity={quantity}</span></div>
<div class="row" style="transform:translateY(508.16px) rotate(0.003deg)"><span class="t" style="left:24.04px;color:#d2d2d2;">12:22:08</span><span class="t b" style="left:87.67px;color:#489df8;">INFO</span><span class="t" style="left:130.09px;color:#5ccb24;">08b51e83166c</span><span class="t" style="left:222px;color:#3f8fe6;">cart</span><span class="t" style="left:342.19px;color:#d8bf40;">GetCartAsync</span><span class="t" style="left:434.1px;color:#d8bf40;">called</span><span class="t" style="left:483.59px;color:#d8bf40;">with</span><span class="t" style="left:518.94px;color:#d8bf40;">userId={userId}</span></div>
<div class="row" style="transform:translateY(522.3px) rotate(0.003deg)"><span class="t" style="left:24.04px;color:#d2d2d2;">12:22:08</span><span class="t b" style="left:87.67px;color:#489df8;">INFO</span><span class="t" style="left:130.09px;color:#5ccb24;">08b51e83166c</span><span class="t" style="left:222px;color:#3f8fe6;">cart</span><span class="t" style="left:342.19px;color:#d8bf40;">GetCartAsync</span><span class="t" style="left:434.1px;color:#d8bf40;">called</span><span class="t" style="left:483.59px;color:#d8bf40;">with</span><span class="t" style="left:518.94px;color:#d8bf40;">userId={userId}</span></div>
<div class="row" style="transform:translateY(536.44px) rotate(0.003deg)"><span class="t" style="left:24.04px;color:#d2d2d2;">12:22:08</span><span class="t b" style="left:87.67px;color:#489df8;">INFO</span><span class="t" style="left:222px;color:#3f8fe6;">recommendation</span><span class="t" style="left:342.19px;color:#d8bf40;">Receive</span><span class="t" style="left:398.75px;color:#d8bf40;">ListRecommendations</span><span class="t" style="left:540.15px;color:#d8bf40;">for</span><span class="t" style="left:568.43px;color:#d8bf40;">product</span><span class="t" style="left:624.99px;color:#d8bf40;">ids:[&#x27;HQTGWGPNH4&#x27;,</span><span class="t" style="left:759.32px;color:#d8bf40;">&#x27;OLJCESPC7Z&#x27;,</span><span class="t" style="left:858.3px;color:#d8bf40;">&#x27;L9ECAV7KIM&#x27;,</span><span class="t" style="left:957.28px;color:#d8bf40;">&#x27;LS4P...</span></div>
<div class="row" style="transform:translateY(550.58px) rotate(0.003deg)"><span class="t" style="left:24.04px;color:#d2d2d2;">12:22:08</span><span class="t b" style="left:87.67px;color:#489df8;">INFO</span><span class="t" style="left:222px;color:#3f8fe6;">recommendation</span><span class="t" style="left:342.19px;color:#d8bf40;">Receive</span><span class="t" style="left:398.75px;color:#d8bf40;">ListRecommendations</span><span class="t" style="left:540.15px;color:#d8bf40;">for</span><span class="t" style="left:568.43px;color:#d8bf40;">product</span><span class="t" style="left:624.99px;color:#d8bf40;">ids:[&#x27;OLJCESPC7Z&#x27;,</span><span class="t" style="left:759.32px;color:#d8bf40;">&#x27;1YMWWN1N4O&#x27;,</span><span class="t" style="left:858.3px;color:#d8bf40;">&#x27;6E92ZMYYFZ&#x27;,</span><span class="t" style="left:957.28px;color:#d8bf40;">&#x27;9SIQ...</span></div>
<div class="row" style="transform:translateY(564.72px) rotate(0.003deg)"><span class="t" style="left:24.04px;color:#d2d2d2;">12:22:08</span><span class="t b" style="left:87.67px;color:#489df8;">INFO</span><span class="t" style="left:222px;color:#3f8fe6;">recommendation</span><span class="t" style="left:342.19px;color:#d8bf40;">Receive</span><span class="t" style="left:398.75px;color:#d8bf40;">ListRecommendations</span><span class="t" style="left:540.15px;color:#d8bf40;">for</span><span class="t" style="left:568.43px;color:#d8bf40;">product</span><span class="t" style="left:624.99px;color:#d8bf40;">ids:[&#x27;L9ECAV7KIM&#x27;,</span><span class="t" style="left:759.32px;color:#d8bf40;">&#x27;2ZYFJ3GM2N&#x27;,</span><span class="t" style="left:858.3px;color:#d8bf40;">&#x27;LS4PSXUNUM&#x27;,</span><span class="t" style="left:957.28px;color:#d8bf40;">&#x27;66VC...</span></div>
<div class="row" style="transform:translateY(578.86px) rotate(0.003deg)"><span class="t" style="left:24.04px;color:#d2d2d2;">12:22:08</span><span class="t b" style="left:87.67px;color:#489df8;">INFO</span><span class="t" style="left:130.09px;color:#5ccb24;">ac46c7f5cceb</span><span class="t" style="left:222px;color:#3f8fe6;">kafka</span><span class="t" style="left:342.19px;color:#d8bf40;">[LocalLog</span><span class="t" style="left:412.89px;color:#d8bf40;">partition=__cluster_metadata</span><span class="t" style="left:617.92px;color:#d8bf40;">0,</span><span class="t" style="left:639.13px;color:#d8bf40;">dir=/tmp/kafka</span><span class="t" style="left:745.18px;color:#d8bf40;">logs]</span><span class="t" style="left:787.6px;color:#d8bf40;">Rolled</span><span class="t" style="left:837.09px;color:#d8bf40;">new</span><span class="t" style="left:865.37px;color:#d8bf40;">log</span><span class="t" style="left:893.65px;color:#d8bf40;">segment</span><span class="t" style="left:950.21px;color:#d8bf40;">at</span><span class="t" style="left:971.42px;color:#d8bf40;">off...</span></div>
<div class="row" style="transform:translateY(593px) rotate(0.003deg)"><span class="t" style="left:24.04px;color:#d2d2d2;">12:22:08</span><span class="t b" style="left:87.67px;color:#489df8;">INFO</span><span class="t" style="left:130.09px;color:#5ccb24;">ac46c7f5cceb</span><span class="t" style="left:222px;color:#3f8fe6;">kafka</span><span class="t" style="left:342.19px;color:#d8bf40;">[ProducerStateManager</span><span class="t" style="left:497.73px;color:#d8bf40;">partition=__cluster_metadata</span><span class="t" style="left:702.76px;color:#d8bf40;">0]</span><span class="t" style="left:723.97px;color:#d8bf40;">Wrote</span><span class="t" style="left:766.39px;color:#d8bf40;">producer</span><span class="t" style="left:830.02px;color:#d8bf40;">snapshot</span><span class="t" style="left:893.65px;color:#d8bf40;">at</span><span class="t" style="left:914.86px;color:#d8bf40;">offset</span><span class="t" style="left:964.35px;color:#d8bf40;">1714...</span></div>
<div class="row" style="transform:translateY(607.14px) rotate(0.003deg)"><span class="t" style="left:24.04px;color:#d2d2d2;">12:22:08</span><span class="t b" style="left:87.67px;color:#489df8;">INFO</span><span class="t" style="left:130.09px;color:#5ccb24;">e81ca6c9d7b5</span><span class="t" style="left:222px;color:#3f8fe6;">payment</span><span class="t" style="left:342.19px;color:#d8bf40;">Charge</span><span class="t" style="left:391.68px;color:#d8bf40;">request</span><span class="t" style="left:448.24px;color:#d8bf40;">received.</span></div>
<div class="row" style="transform:translateY(621.28px) rotate(0.003deg)"><span class="t" style="left:24.04px;color:#d2d2d2;">12:22:08</span><span class="t b" style="left:87.67px;color:#f2857d;">ERROR</span><span class="t" style="left:130.09px;color:#5ccb24;">e81ca6c9d7b5</span><span class="t" style="left:222px;color:#3f8fe6;">payment</span><span class="t" style="left:342.19px;color:#d8bf40;">Visa</span><span class="t" style="left:377.54px;color:#d8bf40;">cache</span><span class="t" style="left:419.96px;color:#d8bf40;">full:</span><span class="t" style="left:462.38px;color:#d8bf40;">cannot</span><span class="t" style="left:511.87px;color:#d8bf40;">add</span><span class="t" style="left:540.15px;color:#d8bf40;">new</span><span class="t" style="left:568.43px;color:#d8bf40;">item.</span></div>
<div class="row" style="transform:translateY(635.42px) rotate(0.003deg)"><span class="t" style="left:24.04px;color:#d2d2d2;">12:22:08</span><span class="t b" style="left:87.67px;color:#489df8;">INFO</span><span class="t" style="left:222px;color:#3f8fe6;">currency</span><span class="t" style="left:342.19px;color:#d8bf40;">Convert</span><span class="t" style="left:398.75px;color:#d8bf40;">conversion</span><span class="t" style="left:476.52px;color:#d8bf40;">successful</span></div>
<div class="row" style="transform:translateY(649.56px) rotate(0.003deg)"><span class="t" style="left:24.04px;color:#d2d2d2;">12:22:08</span><span class="t b" style="left:87.67px;color:#489df8;">INFO</span><span class="t" style="left:222px;color:#3f8fe6;">currency</span><span class="t" style="left:342.19px;color:#d8bf40;">Convert</span><span class="t" style="left:398.75px;color:#d8bf40;">conversion</span><span class="t" style="left:476.52px;color:#d8bf40;">successful</span></div>
<div class="row" style="transform:translateY(663.7px) rotate(0.003deg)"><span class="t" style="left:24.04px;color:#d2d2d2;">12:22:13</span><span class="t b" style="left:87.67px;color:#489df8;">INFO</span><span class="t" style="left:130.09px;color:#5ccb24;">ab25f780f642</span><span class="t" style="left:222px;color:#3f8fe6;">ad</span><span class="t" style="left:342.19px;color:#d8bf40;">no</span><span class="t" style="left:363.4px;color:#d8bf40;">baggage</span><span class="t" style="left:419.96px;color:#d8bf40;">found</span><span class="t" style="left:462.38px;color:#d8bf40;">in</span><span class="t" style="left:483.59px;color:#d8bf40;">context</span></div>
<div class="row" style="transform:translateY(677.84px) rotate(0.003deg)"><span class="t" style="left:24.04px;color:#d2d2d2;">12:22:13</span><span class="t b" style="left:87.67px;color:#489df8;">INFO</span><span class="t" style="left:130.09px;color:#5ccb24;">ab25f780f642</span><span class="t" style="left:222px;color:#3f8fe6;">ad</span><span class="t" style="left:342.19px;color:#d8bf40;">Targeted</span><span class="t" style="left:405.82px;color:#d8bf40;">ad</span><span class="t" style="left:427.03px;color:#d8bf40;">request</span><span class="t" style="left:483.59px;color:#d8bf40;">received</span><span class="t" style="left:547.22px;color:#d8bf40;">for</span><span class="t" style="left:575.5px;color:#d8bf40;">[telescopes,</span><span class="t" style="left:667.41px;color:#d8bf40;">books,</span><span class="t" style="left:716.9px;color:#d8bf40;">accessories]</span></div>
<div class="row" style="transform:translateY(691.98px) rotate(0.003deg)"><span class="t" style="left:24.04px;color:#d2d2d2;">12:22:13</span><span class="t b" style="left:87.67px;color:#489df8;">INFO</span><span class="t" style="left:130.09px;color:#5ccb24;">20bdc678616d</span><span class="t" style="left:222px;color:#3f8fe6;">quote</span><span class="t" style="left:342.19px;color:#d8bf40;">Calculated</span><span class="t" style="left:419.96px;color:#d8bf40;">quote</span></div>
<div class="row" style="transform:translateY(706.12px) rotate(0.003deg)"><span class="t" style="left:24.04px;color:#d2d2d2;">12:22:13</span><span class="t b" style="left:87.67px;color:#489df8;">INFO</span><span class="t" style="left:130.09px;color:#5ccb24;">20bdc678616d</span><span class="t" style="left:222px;color:#3f8fe6;">quote</span><span class="t" style="left:342.19px;color:#d8bf40;">Calculated</span><span class="t" style="left:419.96px;color:#d8bf40;">quote</span></div>
<div class="row" style="transform:translateY(734.4px) rotate(0.003deg)"><span class="t" style="left:9.9px;color:#f0f0f0;">[Counts]</span><span class="t" style="left:158.37px;color:#f0f0f0;">Click</span><span class="t" style="left:200.79px;color:#f0f0f0;">sections</span><span class="t" style="left:278.56px;color:#f0f0f0;">Wheel:</span><span class="t" style="left:328.05px;color:#f0f0f0;">scroll</span><span class="t" style="left:391.68px;color:#f0f0f0;">Space:</span><span class="t" style="left:441.17px;color:#f0f0f0;">Pause</span><span class="t" style="left:497.73px;color:#f0f0f0;">Tab:</span><span class="t" style="left:533.08px;color:#f0f0f0;">Navigate</span><span class="t" style="left:610.85px;color:#f0f0f0;">i:</span><span class="t" style="left:632.06px;color:#f0f0f0;">Statistics</span><span class="t" style="left:723.97px;color:#f0f0f0;">Enter:</span><span class="t" style="left:773.46px;color:#f0f0f0;">Select</span><span class="t" style="left:837.09px;color:#f0f0f0;">?/h</span><span class="t" style="left:943.14px;color:#f0f0f0;">Update:</span><span class="t" style="left:999.7px;color:#f0f0f0;">1s</span></div>
</div>
</body></html>
